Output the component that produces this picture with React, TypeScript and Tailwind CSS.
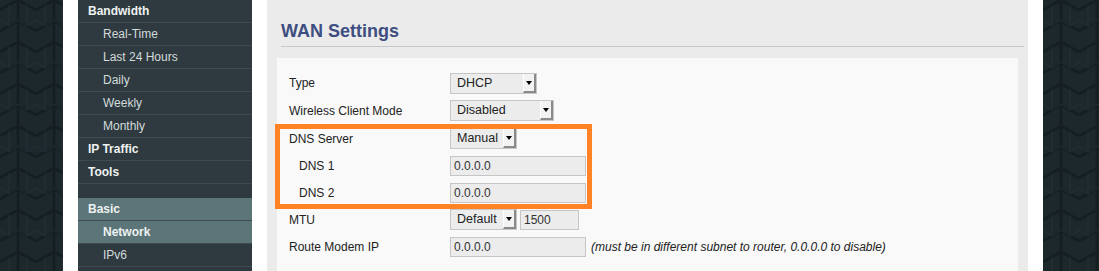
import React from "react";

const menu: { label: string; sub?: boolean; bold?: boolean; active?: boolean; gapBefore?: boolean }[] = [
  { label: "Bandwidth", bold: true },
  { label: "Real-Time", sub: true },
  { label: "Last 24 Hours", sub: true },
  { label: "Daily", sub: true },
  { label: "Weekly", sub: true },
  { label: "Monthly", sub: true },
  { label: "IP Traffic", bold: true },
  { label: "Tools", bold: true },
  { label: "Basic", bold: true, active: true, gapBefore: true },
  { label: "Network", sub: true, bold: true, active: true },
  { label: "IPv6", sub: true },
];

function Pattern({ id }: { id: string }) {
  return (
    <svg className="h-full w-full" xmlns="http://www.w3.org/2000/svg">
      <defs>
        <pattern id={id} width="36" height="42" patternUnits="userSpaceOnUse">
          <rect width="36" height="42" fill="#1c282c" />
          <path d="M0 10 L18 0 L36 10 M18 0 V21 M0 31 L18 21 L36 31 M18 21 V42" stroke="#151f22" strokeWidth="3" fill="none" />
          <path d="M9 5 V26 M27 5 V26 M0 20 L9 26 L18 20 M18 20 L27 26 L36 20" stroke="#22323a" strokeWidth="1" fill="none" opacity="0.8" />
        </pattern>
      </defs>
      <rect width="100%" height="100%" fill={`url(#${id})`} />
    </svg>
  );
}

function Select({ value, width }: { value: string; width: string }) {
  return (
    <div className={`flex h-[21px] items-stretch border border-[#c6c6c6] bg-[#ececec] ${width}`}>
      <span className="flex-1 pl-[6px] text-[12.5px] leading-[19px] text-[#222]">{value}</span>
      <span className="flex w-[13px] items-center justify-center border-b-2 border-l border-r-2 border-b-[#8a8a8a] border-l-white border-r-[#8a8a8a] bg-[#f2f2f2]">
        <span className="mt-[1px] h-0 w-0 border-l-[3px] border-r-[3px] border-t-[4px] border-l-transparent border-r-transparent border-t-black" />
      </span>
    </div>
  );
}

function Input({ value, width }: { value: string; width: string }) {
  return (
    <div className={`h-[20px] border border-[#c6c6c6] bg-[#ececec] pl-[3px] text-[12px] leading-[18px] text-[#333] ${width}`}>
      {value}
    </div>
  );
}

function Row({ label, indent, h, children }: { label: string; indent?: boolean; h: string; children: React.ReactNode }) {
  return (
    <div className={`flex items-center ${h}`}>
      <div className={`w-[161px] text-[12px] text-[#222] ${indent ? "pl-[10px]" : ""}`}>{label}</div>
      <div className="flex items-center gap-[3px]">{children}</div>
    </div>
  );
}

export default function App() {
  return (
    <div className="flex h-[271px] w-[1099px] overflow-hidden bg-white" style={{ fontFamily: '"Liberation Sans", Arial, sans-serif' }}>
      <div className="h-full w-[63px] shrink-0">
        <Pattern id="pl" />
      </div>
      <div className="w-[15px] shrink-0" />

      {/* sidebar */}
      <div className="w-[174px] shrink-0 bg-[#2e3a3f]">
        {menu.map((m) => (
          <React.Fragment key={m.label}>
            {m.gapBefore && <div className="h-[14px]" />}
            <div
              className={`h-[23px] border-b border-[#3d4a4f] text-[12px] leading-[22px] ${m.sub ? "pl-[25px]" : "pl-[10px]"} ${
                m.bold ? "font-bold text-[#eef2f2]" : "text-[#d3dbdc]"
              } ${m.active ? "bg-[#5b7579]" : ""}`}
            >
              {m.label}
            </div>
          </React.Fragment>
        ))}
      </div>
      <div className="w-[15px] shrink-0" />

      {/* content */}
      <div className="w-[761px] shrink-0 bg-[#ebebeb]">
        <div className="ml-[14px] mr-[4px] border-b border-[#c8c8c8] pb-[4px] pt-[20px]">
          <h1 className="text-[18px] font-bold leading-[22px] text-[#3e4e80]">WAN Settings</h1>
        </div>
        <div className="relative mx-[10px] mt-[11px] h-[213px] bg-[#f9f9f9] pl-[12px] pt-[11px]">
          <Row label="Type" h="h-[28px]">
            <Select value="DHCP" width="w-[87px]" />
          </Row>
          <Row label="Wireless Client Mode" h="h-[27px]">
            <Select value="Disabled" width="w-[104px]" />
          </Row>
          <Row label="DNS Server" h="h-[29px]">
            <Select value="Manual" width="w-[67px]" />
          </Row>
          <Row label="DNS 1" indent h="h-[26px]">
            <Input value="0.0.0.0" width="w-[136px]" />
          </Row>
          <Row label="DNS 2" indent h="h-[27px]">
            <Input value="0.0.0.0" width="w-[136px]" />
          </Row>
          <Row label="MTU" h="h-[27px]">
            <Select value="Default" width="w-[67px]" />
            <Input value="1500" width="w-[59px]" />
          </Row>
          <Row label="Route Modem IP" h="h-[27px]">
            <Input value="0.0.0.0" width="w-[136px]" />
            <span className="ml-[2px] text-[12px] italic text-[#222]">(must be in different subnet to router, 0.0.0.0 to disable)</span>
          </Row>

          {/* annotation */}
          <div className="pointer-events-none absolute left-[-2px] top-[66px] h-[85px] w-[317px] border-[5px] border-[#ff8224]" />
        </div>
      </div>
      <div className="w-[15px] shrink-0" />
      <div className="h-full flex-1">
        <Pattern id="pr" />
      </div>
    </div>
  );
}
